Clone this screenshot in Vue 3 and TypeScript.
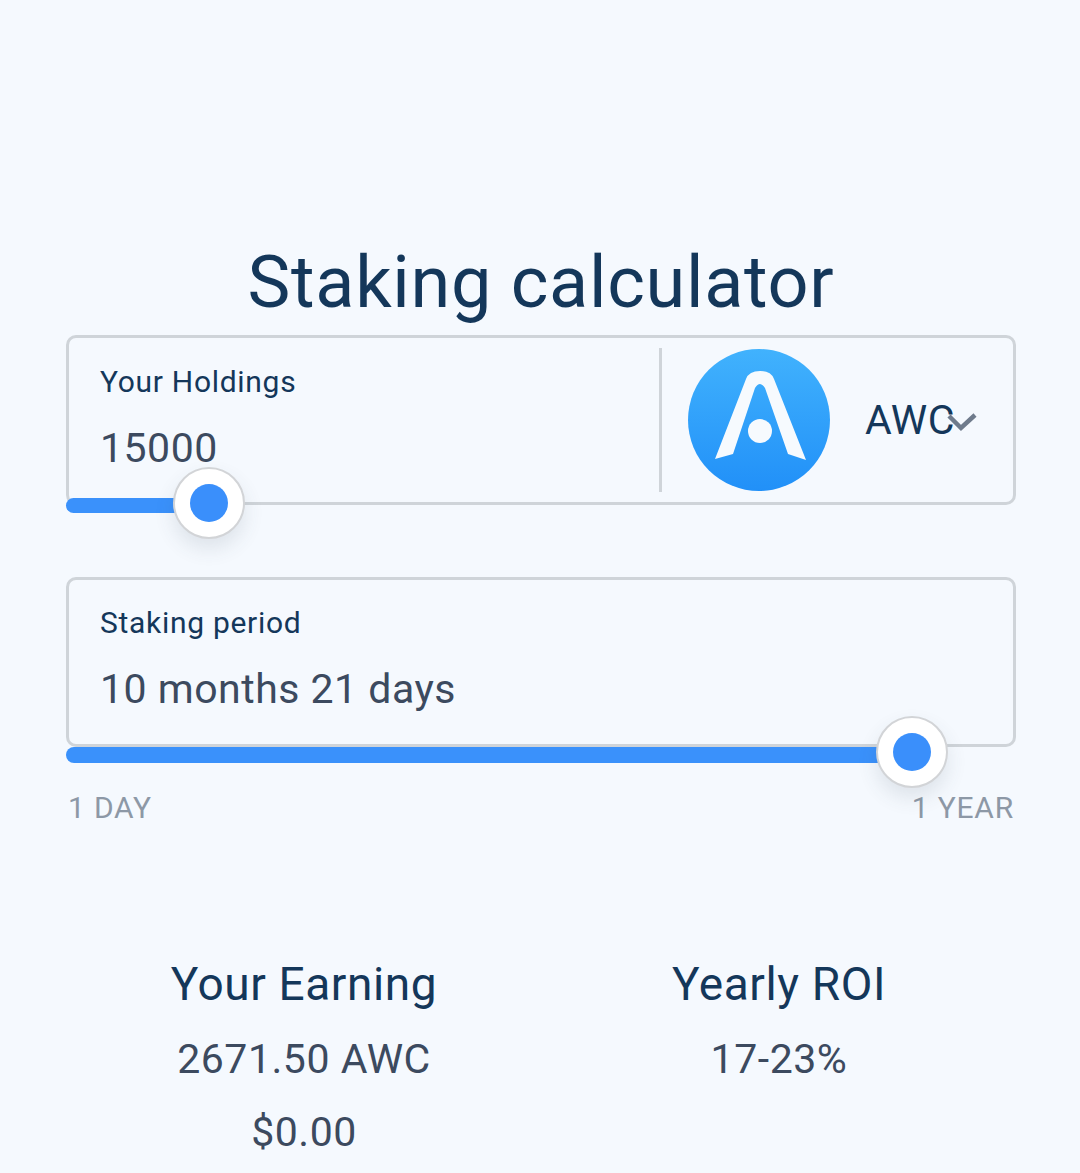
<script setup lang="ts">
type Stat = {
    title: string
    lines: string[]
}

const stats: Stat[] = [
    { title: 'Your Earning', lines: ['2671.50 AWC', '$0.00'] },
    { title: 'Yearly ROI', lines: ['17-23%'] }
]
</script>

<template>
    <div class="page">
        <h1 class="title">Staking calculator</h1>

        <div class="field field--holdings">
            <div class="field__main">
                <div class="field__label">Your Holdings</div>
                <div class="field__value">15000</div>
            </div>
            <div class="coin">
                <svg class="coin__logo" viewBox="0 0 142 142" width="142" height="142">
                    <defs>
                        <linearGradient id="coinFill" x1="0" y1="0" x2="0" y2="1">
                            <stop offset="0" stop-color="#41b2fd" />
                            <stop offset="1" stop-color="#2190f8" />
                        </linearGradient>
                    </defs>
                    <circle cx="71" cy="71" r="71" fill="url(#coinFill)" />
                    <path d="M58 30 Q61 22 72 22 Q83 22 86 30 L118 111 L100 105 L77 39 Q72 31 67 39 L45 105 L27 110 Z" fill="#f6fafe" />
                    <circle cx="72" cy="82" r="12" fill="#f6fafe" />
                </svg>
                <span class="coin__name">AWC</span>
                <svg class="coin__chevron" viewBox="0 0 30 22" width="30" height="22">
                    <path d="M2 5 L14 17 L28 4" fill="none" stroke="#6f7b8c" stroke-width="4.5" />
                </svg>
            </div>
            <div class="track track--holdings">
                <div class="track__fill"></div>
                <div class="thumb"><span class="thumb__dot"></span></div>
            </div>
        </div>

        <div class="field field--period">
            <div class="field__main">
                <div class="field__label">Staking period</div>
                <div class="field__value">10 months 21 days</div>
            </div>
            <div class="track track--period">
                <div class="track__fill"></div>
                <div class="thumb"><span class="thumb__dot"></span></div>
            </div>
        </div>

        <div class="range">
            <span>1 DAY</span>
            <span>1 YEAR</span>
        </div>

        <div class="stats">
            <div v-for="stat in stats" :key="stat.title" class="stat">
                <div class="stat__title">{{ stat.title }}</div>
                <div v-for="line in stat.lines" :key="line" class="stat__line">{{ line }}</div>
            </div>
        </div>
    </div>
</template>

<style>
    html, body {
        margin: 0;
        background-color: #f5f9fe;
    }
</style>

<style scoped>
    .page {
        width: 1080px;
        height: 1173px;
        box-sizing: border-box;
        overflow: hidden;
        padding: 241px 64px 0 66px;
        background-color: #f5f9fe;
        font-family: Roboto, sans-serif;
        color: #14375a;
    }

    .title {
        margin: 0 0 11px;
        font-size: 72px;
        line-height: 83px;
        font-weight: 400;
        letter-spacing: 0.7px;
        text-align: center;
        color: #14375a;
    }

    .field {
        position: relative;
        display: flex;
        height: 170px;
        box-sizing: border-box;
        border: 3px solid #cfd4d9;
        border-radius: 10px;
    }

    .field--period {
        margin-top: 72px;
    }

    .field__main {
        flex: 1;
        padding: 26px 0 0 31px;
    }

    .field--period .field__main {
        padding-top: 25px;
    }

    .field__label {
        font-size: 30px;
        line-height: 36px;
        letter-spacing: 0.7px;
        color: #14375a;
    }

    .field__value {
        margin-top: 24px;
        font-size: 41px;
        line-height: 48px;
        letter-spacing: 0.5px;
        color: #3c4a5f;
    }

    .coin {
        display: flex;
        align-items: center;
        width: 354px;
        height: 144px;
        margin-top: 10px;
        box-sizing: border-box;
        padding-left: 26px;
        border-left: 3px solid #cfd4d9;
    }

    .coin__logo {
        flex: none;
    }

    .coin__name {
        margin-left: 35px;
        font-size: 41px;
        letter-spacing: 0.5px;
        color: #14375a;
    }

    .coin__chevron {
        margin: 3px 0 0 -8px;
    }

    .track {
        position: absolute;
        left: -3px;
        height: 15px;
    }

    .track--holdings {
        bottom: -11px;
        width: 143px;
    }

    .track--period {
        bottom: -19px;
        width: 846px;
        height: 16px;
    }

    .track__fill {
        width: 100%;
        height: 100%;
        background-color: #3a91fb;
        border-radius: 8px 0 0 8px;
    }

    .thumb {
        position: absolute;
        top: 50%;
        right: -36px;
        width: 72px;
        height: 72px;
        margin-top: -39px;
        box-sizing: border-box;
        display: flex;
        align-items: center;
        justify-content: center;
        background-color: #fff;
        border: 2px solid #d2d4d7;
        border-radius: 50%;
        box-shadow: 0 10px 20px rgba(60, 70, 90, 0.12);
    }

    .thumb__dot {
        width: 38px;
        height: 38px;
        background-color: #3a8ffb;
        border-radius: 50%;
    }

    .range {
        display: flex;
        justify-content: space-between;
        margin-top: 43px;
        padding: 0 2px 0 2px;
        font-size: 30px;
        line-height: 36px;
        letter-spacing: 0.8px;
        color: #8d98a6;
    }

    .stats {
        display: flex;
        margin-top: 131px;
    }

    .stat {
        text-align: center;
    }

    .stat:first-child {
        width: 476px;
    }

    .stat:last-child {
        width: 474px;
    }

    .stat__title {
        padding-bottom: 2px;
        font-size: 46px;
        line-height: 54px;
        letter-spacing: 0.6px;
        color: #14375a;
    }

    .stat__line {
        margin-top: 19px;
        font-size: 41px;
        line-height: 54px;
        letter-spacing: 0.55px;
        color: #3c4a5f;
    }
</style>
